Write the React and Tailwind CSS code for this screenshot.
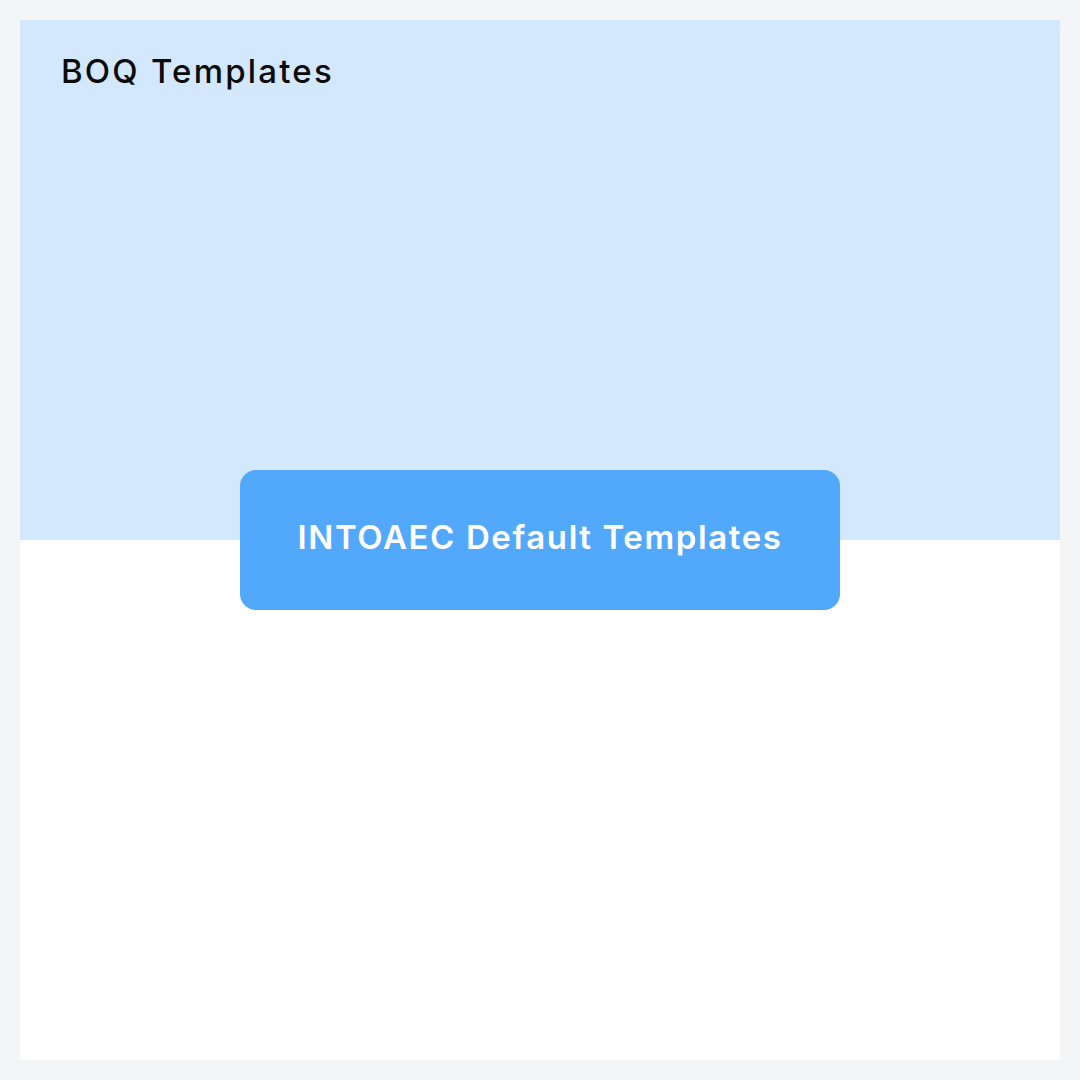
export default function App() {
  return (
    <div className="min-h-screen w-full bg-[#f4f5f7] p-5 font-['Inter',sans-serif]">
      <div className="flex h-[1040px] flex-col bg-white">
        {/* header band */}
        <div className="h-[520px] bg-[#d3e7fd] px-[41px] pt-[31px]">
          <h1 className="text-[33px] font-medium leading-[40px] tracking-[2.2px] text-[#0b0b0b]">
            BOQ Templates
          </h1>
        </div>

        {/* default templates button */}
        <div className="-mt-[70px] flex justify-center">
          <button className="flex h-[140px] w-[600px] items-center justify-center rounded-[16px] bg-[#52a8fa] pb-[4px] text-[33px] font-semibold tracking-[1.6px] text-white">
            INTOAEC Default Templates
          </button>
        </div>
      </div>
    </div>
  );
}
